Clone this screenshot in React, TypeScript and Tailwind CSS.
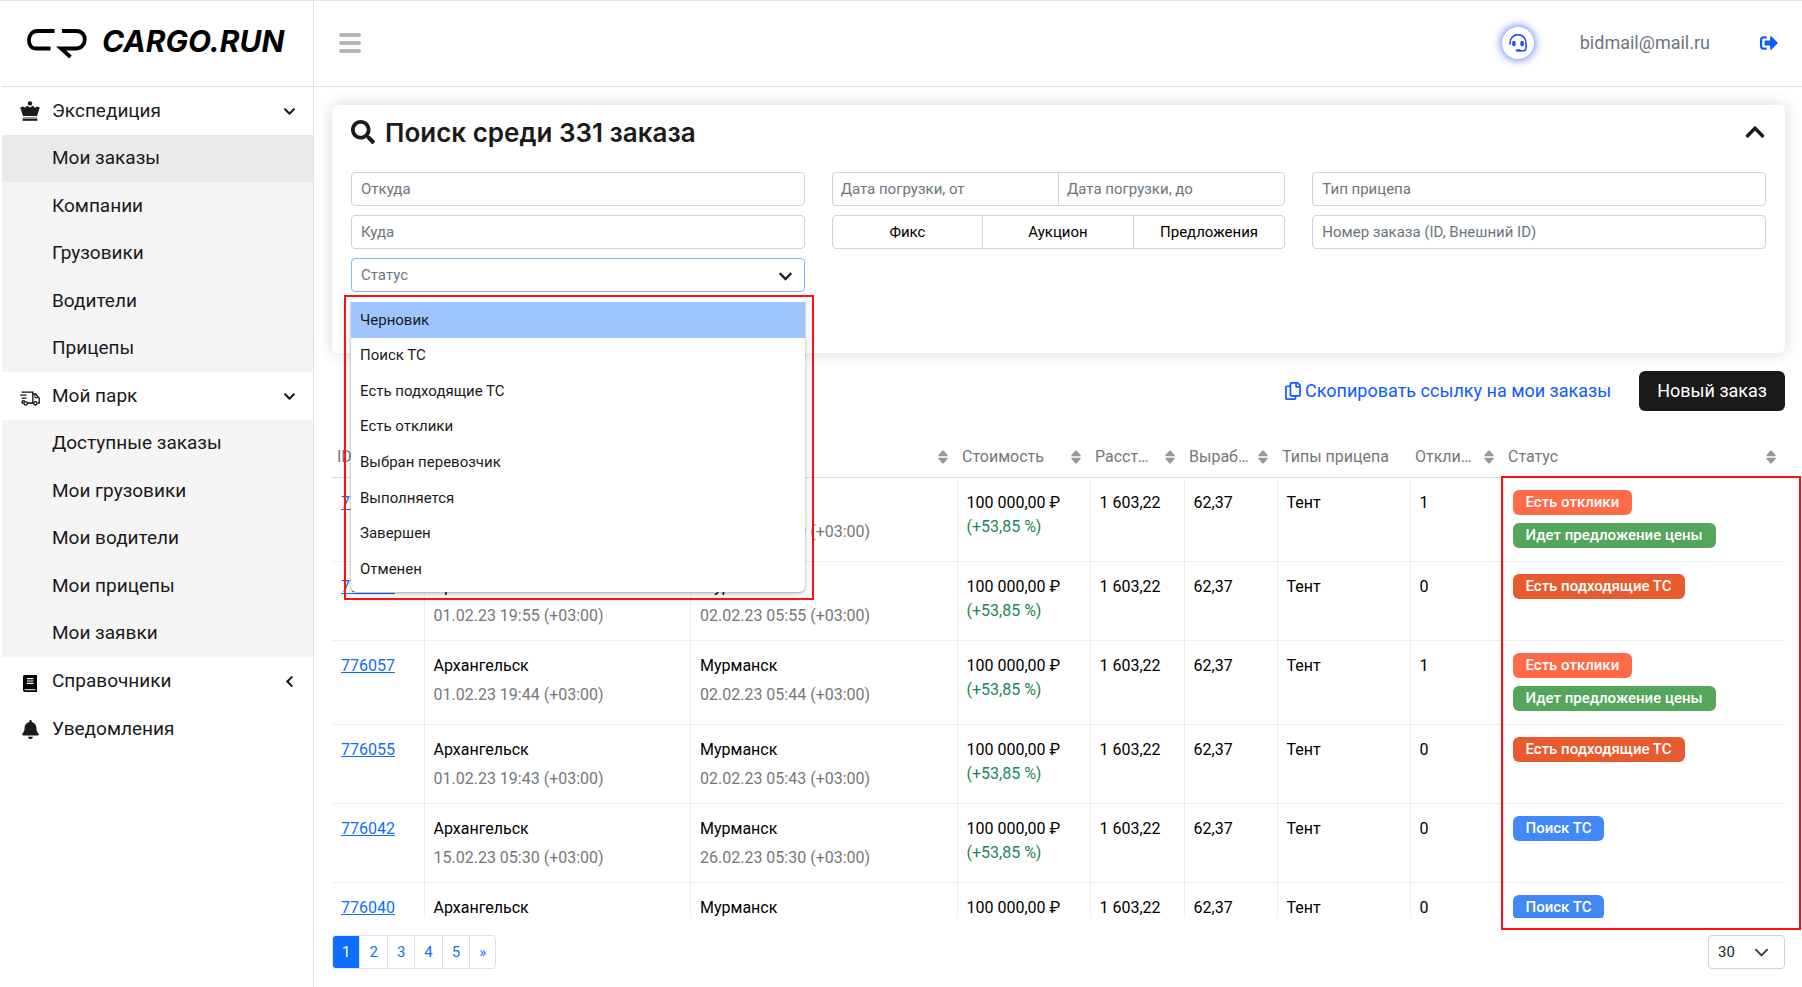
import { useState } from "react";
import type { ReactNode } from "react";
import { FaBell, FaChevronDown, FaChevronLeft, FaChevronUp, FaRegCopy, FaSearch, FaSignOutAlt } from "react-icons/fa";

const STATUSES = [
  "Черновик",
  "Поиск ТС",
  "Есть подходящие ТС",
  "Есть отклики",
  "Выбран перевозчик",
  "Выполняется",
  "Завершен",
  "Отменен",
];

const BADGES: Record<string, string> = {
  "Есть отклики": "bg-[#ff6b47]",
  "Идет предложение цены": "bg-[#53a65b]",
  "Есть подходящие ТС": "bg-[#e65c2e]",
  "Поиск ТС": "bg-[#4388f7]",
};

const ORDERS = [
  { id: "776061", from: "01.02.23 19:59", to: "02.02.23 05:59", replies: 1, status: ["Есть отклики", "Идет предложение цены"] },
  { id: "776059", from: "01.02.23 19:55", to: "02.02.23 05:55", replies: 0, status: ["Есть подходящие ТС"] },
  { id: "776057", from: "01.02.23 19:44", to: "02.02.23 05:44", replies: 1, status: ["Есть отклики", "Идет предложение цены"] },
  { id: "776055", from: "01.02.23 19:43", to: "02.02.23 05:43", replies: 0, status: ["Есть подходящие ТС"] },
  { id: "776042", from: "15.02.23 05:30", to: "26.02.23 05:30", replies: 0, status: ["Поиск ТС"] },
  { id: "776040", from: "15.02.23 05:30", to: "26.02.23 05:30", replies: 0, status: ["Поиск ТС"] },
];

const COLUMNS = [
  { title: "ID", width: "w-[92px]", sort: false },
  { title: "Откуда", width: "", sort: true },
  { title: "Куда", width: "", sort: true },
  { title: "Стоимость", width: "w-[133px]", sort: true },
  { title: "Расстояние", width: "w-[94px]", sort: true },
  { title: "Выработка", width: "w-[93px]", sort: true },
  { title: "Типы прицепа", width: "w-[133px]", sort: false },
  { title: "Отклики", width: "w-[93px]", sort: true },
  { title: "Статус", width: "w-[282px]", sort: true },
];

const FIELD =
  "h-[34px] w-full min-w-0 rounded border border-[#ced4da] bg-white px-[9px] text-[15px] text-[#212529] placeholder:text-[#6c757d] outline-none";

function CrownIcon() {
  return (
    <svg viewBox="0 0 20 20" className="size-5" fill="#1a1a1a">
      <circle cx="10" cy="2.4" r="2.2" />
      <path d="M.2 6.6 3 5.4l2 1.4 2.2-2 2.8 1.6 2.8-1.6 2.2 2 2-1.4 2.8 1.2L17 15H3z" />
      <path d="M2.8 16.2h14.4v1H2.8z" fill="#777" />
      <path d="M2.6 17.6h14.8v2.2H2.6z" />
    </svg>
  );
}

function TruckIcon() {
  return (
    <svg viewBox="0 0 20 15" className="mt-1 h-[15px] w-5" fill="none" stroke="#111" strokeWidth="1.3">
      <path d="M1.5 1.2h11.3V12" />
      <path d="M.3 4.2h6.2M1.6 7.2h5M2.2 9.8V12h1.5M7.6 12h5.5M12.8 3h2.8l3.6 4.2V12h-1.6" />
      <path d="M15 3.4v3.3h3.7" strokeWidth="1" />
      <path d="M2.2 9.8h2.6" />
      <circle cx="5.7" cy="12.3" r="1.7" />
      <circle cx="15.3" cy="12.3" r="1.7" />
    </svg>
  );
}

function BookIcon() {
  return (
    <svg viewBox="0 0 14 17" className="mt-1 h-[17px] w-[14px]">
      <path d="M1.6 0H14v17H2a2 2 0 0 1-2-2V1.6A1.6 1.6 0 0 1 1.6 0z" fill="#000" />
      <path d="M4 3.6h6.4M4 6h6.4M4 8.4h6.4M1.6 14.8h11" stroke="#fff" strokeWidth="1.1" />
    </svg>
  );
}

function HeadsetIcon() {
  return (
    <svg viewBox="0 0 18 18" className="size-[18px]" fill="none" stroke="#1f4df0" strokeWidth="1.6" strokeLinecap="round">
      <path d="M1 10V8.6a8 8 0 0 1 16 0v5.6a2.6 2.6 0 0 1-2.6 2.6H9" />
      <path d="M8 16.4h2.6" strokeWidth="2.4" />
      <rect x="3.2" y="7" width="3.4" height="5.2" rx="1.4" fill="#1f4df0" stroke="none" />
      <rect x="11.4" y="7" width="3.4" height="5.2" rx="1.4" fill="#1f4df0" stroke="none" />
    </svg>
  );
}

function SortIcon() {
  return (
    <svg viewBox="0 0 10 14" className="h-[14px] w-[10px] shrink-0" fill="#999">
      <path d="M4.2.8a1.1 1.1 0 0 1 1.6 0l3.7 4.1c.5.6.2 1.3-.5 1.3H1c-.7 0-1-.7-.5-1.3z" />
      <path d="M4.2 13.2a1.1 1.1 0 0 0 1.6 0l3.7-4.1c.5-.6.2-1.3-.5-1.3H1c-.7 0-1 .7-.5 1.3z" />
    </svg>
  );
}

function Logo() {
  return (
    <a href="#" className="flex items-start gap-[15px] text-black">
      <svg viewBox="0 0 60 30" className="h-[30px] w-[60px]" fill="none" stroke="#000" strokeWidth="3.8">
        <path d="M27.5 2H10.500C-.5 2-.5 19.500 8.500 19.500H23.500" />
        <path d="M35 2h14c12.500 0 11 17.500 0 17.500H34L43.500 28" />
      </svg>
      <span className="font-[Inter,sans-serif] text-[30px] leading-6 font-bold italic">CARGO.RUN</span>
    </a>
  );
}

function NavGroup({ icon, title, arrow, items }: { icon: ReactNode; title: string; arrow?: ReactNode; items?: string[] }) {
  return (
    <li>
      <a href="#" className="flex h-12 items-center pr-[17px] pl-[18px]">
        <span className="flex w-5 justify-center">{icon}</span>
        <span className="ml-3 flex-1">{title}</span>
        {arrow}
      </a>
      {items && (
        <ul className="grid h-[237px] grid-rows-5 bg-[#f5f5f5]">
          {items.map((item) => (
            <li key={item} className={item === "Мои заказы" ? "bg-[#eaeaea]" : ""}>
              <a href="#" className="flex h-full items-center pl-[50px]">
                {item}
              </a>
            </li>
          ))}
        </ul>
      )}
    </li>
  );
}

function Sidebar() {
  return (
    <aside className="w-[312px] shrink-0 border-r border-[#dee2e6]">
      <div className="flex h-[86px] items-center border-b border-[#dee2e6] pl-[25px]">
        <Logo />
      </div>
      <ul className="text-[19px] text-[#1a1a1a]">
        <NavGroup
          icon={<CrownIcon />}
          title="Экспедиция"
          arrow={<FaChevronDown className="size-[13px]" />}
          items={["Мои заказы", "Компании", "Грузовики", "Водители", "Прицепы"]}
        />
        <NavGroup
          icon={<TruckIcon />}
          title="Мой парк"
          arrow={<FaChevronDown className="size-[13px]" />}
          items={["Доступные заказы", "Мои грузовики", "Мои водители", "Мои прицепы", "Мои заявки"]}
        />
        <NavGroup icon={<BookIcon />} title="Справочники" arrow={<FaChevronLeft className="size-[13px]" />} />
        <NavGroup icon={<FaBell className="size-[19px]" />} title="Уведомления" />
      </ul>
    </aside>
  );
}

function Header() {
  return (
    <header className="flex h-[86px] shrink-0 items-center border-b border-[#dee2e6] pr-6 pb-0.5 pl-[25px]">
      <button aria-label="Меню" className="flex flex-col gap-1">
        <span className="h-1 w-[22px] rounded-xs bg-[#b5b5b5]" />
        <span className="h-1 w-[22px] rounded-xs bg-[#b5b5b5]" />
        <span className="h-1 w-[22px] rounded-xs bg-[#b5b5b5]" />
      </button>
      <button
        aria-label="Поддержка"
        className="ml-auto flex size-8 items-center justify-center rounded-full bg-white shadow-[0_0_8px_1px_#5b7bff]"
      >
        <HeadsetIcon />
      </button>
      <span className="ml-[46px] text-lg text-[#6c757d]">bidmail@mail.ru</span>
      <a href="#" aria-label="Выйти" className="ml-[50px] text-[#0d5cff]">
        <FaSignOutAlt className="size-[18px]" />
      </a>
    </header>
  );
}

function StatusSelect() {
  const [open, setOpen] = useState(true);
  const [active, setActive] = useState(STATUSES[0]);

  return (
    <div className="relative">
      <input
        aria-label="Статус"
        placeholder="Статус"
        className="h-[34px] w-full rounded border border-[#86b7fe] bg-white px-[9px] text-[15px] outline-none placeholder:text-[#6c757d]"
      />
      <button aria-label="Открыть список" onClick={() => setOpen(!open)} className="absolute top-[11px] right-3">
        <FaChevronDown className="size-[15px] text-[#212529]" />
      </button>
      {open && (
        <div className="absolute inset-x-0 top-[39px] z-10">
          <ul className="grid h-[295px] grid-rows-8 rounded-md bg-white py-[5px] text-[15px] text-[#1a1a1a] shadow-[0_1px_3px_rgba(0,0,0,0.3),0_6px_12px_rgba(0,0,0,0.08)]">
            {STATUSES.map((s) => (
              <li key={s}>
                <button
                  onMouseEnter={() => setActive(s)}
                  className={`h-full w-full px-[9px] text-left ${s === active ? "bg-[#9ec5fe]" : ""}`}
                >
                  {s}
                </button>
              </li>
            ))}
          </ul>
          <div className="pointer-events-none absolute -top-[2px] -right-[9px] -bottom-2 -left-[7px] border-2 border-[#ff1010]" />
        </div>
      )}
    </div>
  );
}

function SearchCard() {
  return (
    <section className="rounded-md bg-white px-[19px] pt-[9px] pb-[61px] shadow-[0_0_16px_rgba(0,0,0,0.16)]">
      <div className="mb-[22px] flex h-9 items-center">
        <FaSearch className="size-6 text-[#1a1a1a]" />
        <h1 className="ml-[10px] font-[Inter,sans-serif] text-[26px] font-semibold text-[#1a1a1a]">
          Поиск среди 331 заказа
        </h1>
        <button aria-label="Свернуть" className="ml-auto">
          <FaChevronUp className="size-[22px] text-[#1a1a1a]" />
        </button>
      </div>
      <div className="grid grid-cols-3 gap-x-[27px]">
        <div className="flex flex-col gap-[9px]">
          <input aria-label="Откуда" placeholder="Откуда" className={FIELD} />
          <input aria-label="Куда" placeholder="Куда" className={FIELD} />
          <StatusSelect />
        </div>
        <div className="flex flex-col gap-[9px]">
          <div className="flex divide-x divide-[#ced4da] rounded border border-[#ced4da]">
            <input
              aria-label="Дата погрузки, от"
              placeholder="Дата погрузки, от"
              className="h-8 min-w-0 flex-1 px-2 text-[15px] outline-none placeholder:text-[#6c757d]"
            />
            <input
              aria-label="Дата погрузки, до"
              placeholder="Дата погрузки, до"
              className="h-8 min-w-0 flex-1 px-2 text-[15px] outline-none placeholder:text-[#6c757d]"
            />
          </div>
          <div className="grid grid-cols-3 divide-x divide-[#ced4da] rounded border border-[#ced4da]">
            {["Фикс", "Аукцион", "Предложения"].map((t) => (
              <button key={t} className="h-8 text-[15px] text-black">
                {t}
              </button>
            ))}
          </div>
        </div>
        <div className="flex flex-col gap-[9px]">
          <input aria-label="Тип прицепа" placeholder="Тип прицепа" className={FIELD} />
          <input aria-label="Номер заказа" placeholder="Номер заказа (ID, Внешний ID)" className={FIELD} />
        </div>
      </div>
    </section>
  );
}

function Place({ city, date }: { city: string; date: string }) {
  return (
    <td className="border-r border-[#eeeeee] px-[9px] pt-[13px] pb-3">
      <div>{city}</div>
      <div className="mt-[5px] text-[#777]">{date} (+03:00)</div>
    </td>
  );
}

function OrdersTable() {
  return (
    <div className="relative mt-6 min-h-0 flex-1">
      <div className="h-full overflow-hidden">
        <table className="w-full table-fixed text-left text-base leading-6 text-black">
          <thead>
            <tr className="h-[42px] border-b border-[#dcdcdc]">
              {COLUMNS.map((c) => (
                <th key={c.title} className={`px-[5px] pt-0.5 font-normal text-[#777] ${c.width}`}>
                  <div className="flex items-center gap-2 pr-1">
                    <span className="min-w-0 flex-1 truncate">{c.title}</span>
                    {c.sort && <SortIcon />}
                  </div>
                </th>
              ))}
            </tr>
          </thead>
          <tbody>
            {ORDERS.map((o) => (
              <tr key={o.id} className="border-b border-[#eeeeee] align-top">
                <td className="border-r border-[#eeeeee] px-[9px] pt-[13px]">
                  <a href="#" className="text-[#0d6efd] underline">
                    {o.id}
                  </a>
                </td>
                <Place city="Архангельск" date={o.from} />
                <Place city="Мурманск" date={o.to} />
                <td className="border-r border-[#eeeeee] px-[9px] pt-[13px] whitespace-nowrap">
                  <div>100 000,00 ₽</div>
                  <div className="text-[#198754]">(+53,85 %)</div>
                </td>
                <td className="border-r border-[#eeeeee] px-[9px] pt-[13px]">1 603,22</td>
                <td className="border-r border-[#eeeeee] px-[9px] pt-[13px]">62,37</td>
                <td className="border-r border-[#eeeeee] px-[9px] pt-[13px]">Тент</td>
                <td className="border-r border-[#eeeeee] px-[9px] pt-[13px]">{o.replies}</td>
                <td className="px-[9px] pt-3 pb-[13px]">
                  <div className="flex flex-col items-start gap-2">
                    {o.status.map((s) => (
                      <span key={s} className={`rounded-md px-[13px] text-[15px] leading-[25px] font-medium text-white ${BADGES[s]}`}>
                        {s}
                      </span>
                    ))}
                  </div>
                </td>
              </tr>
            ))}
          </tbody>
        </table>
      </div>
      <div className="pointer-events-none absolute top-[41px] -right-4 -bottom-3 w-[300px] border-2 border-[#ff1010]" />
    </div>
  );
}

function Footer() {
  return (
    <div className="mt-[17px] flex items-center justify-between text-[15px]">
      <nav className="flex divide-x divide-[#dee2e6] overflow-hidden rounded border border-[#dee2e6] text-[#0d6efd]">
        {["1", "2", "3", "4", "5", "»"].map((p) => (
          <a
            key={p}
            href="#"
            className={`flex h-8 items-center px-[9px] ${p === "1" ? "bg-[#0d6efd] text-white" : ""}`}
          >
            {p}
          </a>
        ))}
      </nav>
      <div className="relative">
        <select
          aria-label="Строк на странице"
          className="h-[34px] w-[77px] appearance-none rounded border border-[#ced4da] bg-white px-[9px] text-[15px] text-[#212529]"
        >
          <option>30</option>
          <option>50</option>
          <option>100</option>
        </select>
        <svg
          viewBox="0 0 16 16"
          className="pointer-events-none absolute top-[10px] right-4 size-[15px]"
          fill="none"
          stroke="#343a40"
          strokeWidth="2"
          strokeLinecap="round"
          strokeLinejoin="round"
        >
          <path d="m2 5 6 6 6-6" />
        </svg>
      </div>
    </div>
  );
}

export default function App() {
  return (
    <div className="flex h-screen border-t border-[#e3e3e3] bg-white pl-[2px] font-[Roboto,sans-serif]">
      <Sidebar />
      <div className="flex min-w-0 flex-1 flex-col">
        <Header />
        <main className="flex min-h-0 flex-1 flex-col py-[18px] pr-[17px] pl-[18px]">
          <SearchCard />
          <div className="mt-[18px] flex items-center justify-end gap-7">
            <a href="#" className="flex items-center gap-1 text-lg text-[#0d5cff]">
              <FaRegCopy className="h-[18px] w-4" />
              Скопировать ссылку на мои заказы
            </a>
            <button className="h-10 rounded-md bg-[#1a1a1a] px-[18px] text-lg text-white">Новый заказ</button>
          </div>
          <OrdersTable />
          <Footer />
        </main>
      </div>
    </div>
  );
}
